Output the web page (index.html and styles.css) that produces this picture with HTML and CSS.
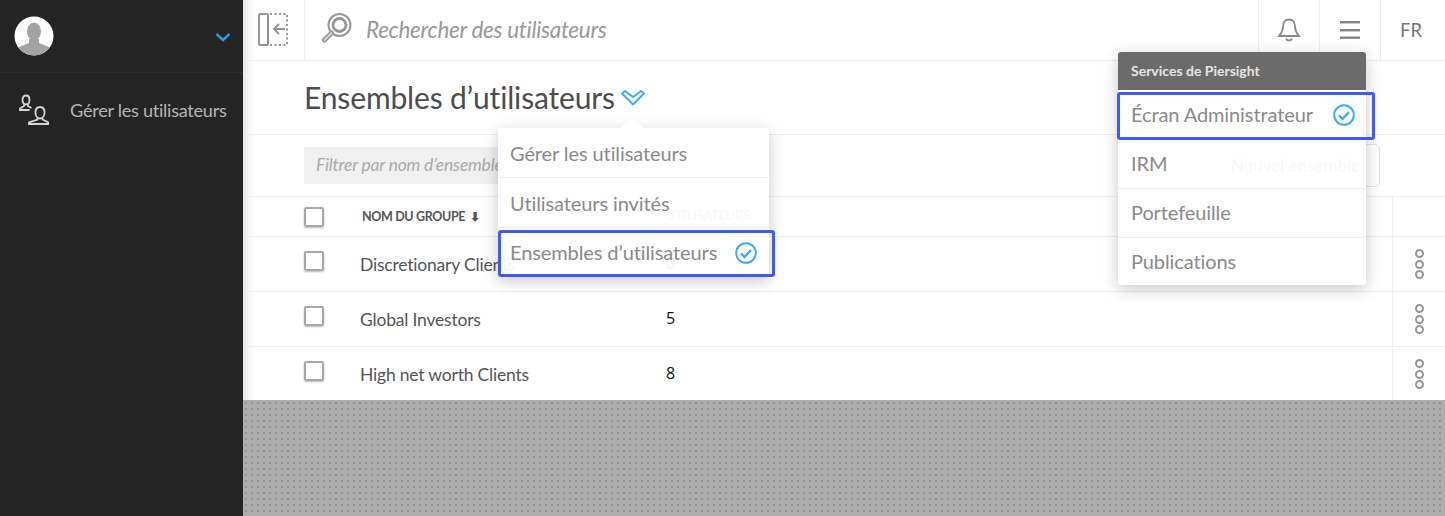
FILE: index.html
```html
<!DOCTYPE html>
<html lang="fr">
<head>
    <meta charset="UTF-8">
    <title>Ensembles d’utilisateurs</title>
    <link rel="stylesheet" href="styles.css">
</head>
<body>
    <div class="app">
        <aside class="sidebar">
            <div class="profile">
                <svg class="avatar" width="40" height="40" viewBox="0 0 40 40">
                    <circle cx="20" cy="20" r="19.5" fill="#fff"/>
                    <clipPath id="avatar-clip"><circle cx="20" cy="20" r="19.5"/></clipPath>
                    <g clip-path="url(#avatar-clip)" fill="#a3a3a3">
                        <ellipse cx="20" cy="15.5" rx="7" ry="9"/>
                        <path d="M15 23h10v4l10 4c3 1 4 5 4 9H1c0-4 1-8 4-9l10-4z"/>
                    </g>
                </svg>
                <svg class="caret" width="16" height="10" viewBox="0 0 16 10"><path d="M1.5 2 8 8l6.500-6" fill="none" stroke="#2a9be0" stroke-width="2.400"/></svg>
            </div>
            <div class="nav-item">
                <svg width="30" height="32" viewBox="0 0 30 32" fill="none" stroke="#d6d6d6" stroke-width="1.800">
                    <path d="M3.500 6c0-3 1.500-4.500 3.500-4.500S10.500 3 10.500 6 9 10.500 7 10.500 3.500 9 3.500 6z"/>
                    <path d="M5 10.500V12l-4 2.500V16h9.500M9 10.500V12l3.500 2"/>
                    <path d="M16.500 18.500c0-3.500 2-5.500 4.500-5.500s4.500 2 4.500 5.500-2 6-4.500 6-4.500-2.500-4.500-6z"/>
                    <path d="M18.500 24v1.500L10 28.500V30h19.500v-1.500L23.500 25.500V24"/>
                </svg>
                <span>Gérer les utilisateurs</span>
            </div>
        </aside>

        <div class="main">
            <header class="topbar">
                <div class="collapse-btn">
                    <svg width="32" height="34" viewBox="0 0 32 34" fill="none" stroke="#959595">
                        <rect x="2" y="2" width="9" height="31" rx="1" stroke-width="2"/>
                        <path d="M13 2h17v31H13" stroke-width="2" stroke-dasharray="2 2.500"/>
                        <path d="M28 17H17M22 12l-5 5 5 5" stroke-width="2"/>
                    </svg>
                </div>
                <div class="search">
                    <svg width="32" height="32" viewBox="0 0 32 32" fill="none" stroke="#969696">
                        <circle cx="18.500" cy="12" r="11" stroke-width="2"/>
                        <circle cx="18.500" cy="12" r="6.500" stroke-width="2.800"/>
                        <path d="M10.500 20 3.500 27" stroke-width="5" stroke-linecap="round"/>
                        <path d="M10.500 20 3.500 27" stroke="#e4e4e4" stroke-width="1.500" stroke-linecap="round"/>
                    </svg>
                    <span>Rechercher des utilisateurs</span>
                </div>
                <div class="top-btn">
                    <svg width="24" height="26" viewBox="0 0 24 26" fill="none" stroke="#8a8a8a" stroke-width="1.800">
                        <path d="M12 2.500c-4 0-6 3-6 7 0 5-2 7-4 9.500h20c-2-2.500-4-4.500-4-9.500 0-4-2-7-6-7zM9 21.500c.5 1.500 1.500 2 3 2s2.500-.5 3-2"/>
                    </svg>
                </div>
                <div class="top-btn">
                    <svg width="20" height="18" viewBox="0 0 20 18" fill="#858585"><rect y="0" width="20" height="2.400"/><rect y="8" width="20" height="2.400"/><rect y="15.500" width="20" height="2.400"/></svg>
                </div>
                <div class="top-btn lang">FR</div>
            </header>

            <div class="title-row">
                <h1>Ensembles d’utilisateurs</h1>
                <svg class="title-caret" width="26" height="18" viewBox="0 0 26 18" fill="none" stroke="#3fa9f5" stroke-width="2" stroke-linejoin="round"><path d="M2 4.500 5 2l8 6 8-6 3 2.500L13 15.500z"/></svg>
            </div>

            <div class="filter-row">
                <div class="filter">Filtrer par nom d’ensemble</div>
                <div class="new-btn">Nouvel ensemble</div>
            </div>

            <div class="row head">
                <span class="box"></span>
                <span class="name">NOM DU GROUPE <b>⬇</b></span>
                <span class="count">UTILISATEURS</span>
                <span class="actions"></span>
            </div>
            <div class="row">
                <span class="box"></span>
                <span class="name">Discretionary Clients</span>
                <span class="count">0</span>
                <span class="actions"><i></i><i></i><i></i></span>
            </div>
            <div class="row">
                <span class="box"></span>
                <span class="name">Global Investors</span>
                <span class="count">5</span>
                <span class="actions"><i></i><i></i><i></i></span>
            </div>
            <div class="row row-last">
                <span class="box"></span>
                <span class="name">High net worth Clients</span>
                <span class="count">8</span>
                <span class="actions"><i></i><i></i><i></i></span>
            </div>
            <div class="backdrop"></div>

            <div class="menu menu-sets">
                <div class="menu-item">Gérer les utilisateurs</div>
                <div class="menu-item">Utilisateurs invités</div>
                <div class="menu-item selected">Ensembles d’utilisateurs
                    <svg width="24" height="24" viewBox="0 0 24 24" fill="none" stroke="#3fa9f5" stroke-width="2"><circle cx="12" cy="12" r="9.800"/><path d="M7 12.500l3.500 3.500L17 9" stroke-width="2.400"/></svg>
                </div>
            </div>

            <div class="menu menu-services">
                <div class="menu-title">Services de Piersight</div>
                <div class="menu-item selected">Écran Administrateur
                    <svg width="24" height="24" viewBox="0 0 24 24" fill="none" stroke="#3fa9f5" stroke-width="2"><circle cx="12" cy="12" r="9.800"/><path d="M7 12.500l3.500 3.500L17 9" stroke-width="2.400"/></svg>
                </div>
                <div class="menu-item">IRM</div>
                <div class="menu-item">Portefeuille</div>
                <div class="menu-item">Publications</div>
            </div>
        </div>
    </div>
</body>
</html>
```

FILE: styles.css
```css
* {
    box-sizing: border-box;
}
html, body {
    height: 100%;
}
body {
    margin: 0;
    overflow: hidden;
    font-family: Lato, "Open Sans", sans-serif;
    color: #666;
    background: #fff;
}
.app {
    display: flex;
    height: 516px;
}
.sidebar {
    width: 243px;
    flex: none;
    background: #242424;
    color: #b5b5b5;
}
.profile {
    height: 73px;
    padding: 16px 12px 0 14px;
    display: flex;
    justify-content: space-between;
    align-items: flex-start;
    border-bottom: 1px solid #2d2d2d;
}
.caret {
    margin-top: 16px;
}
.nav-item {
    display: flex;
    align-items: center;
    gap: 21px;
    padding: 21px 0 0 19px;
    font-size: 18.200px;
    letter-spacing: -0.3px;
}
.main {
    flex: 1;
    position: relative;
    display: flex;
    flex-direction: column;
    box-shadow: inset 14px 0 14px -14px #ccc;
}
.topbar {
    height: 61px;
    display: flex;
    align-items: stretch;
    border-bottom: 1px solid #eee;
}
.collapse-btn {
    width: 62px;
    padding: 12px 0 0 14px;
    border-right: 1px solid #eee;
}
.search {
    flex: 1;
    display: flex;
    align-items: center;
    gap: 13px;
    padding: 0 0 2px 16px;
    font-size: 22.500px;
    font-style: italic;
    color: #999;
    letter-spacing: -0.3px;
}
.top-btn {
    width: 61px;
    display: flex;
    align-items: center;
    justify-content: center;
    border-left: 1px solid #eee;
}
.lang {
    width: 65px;
    padding-right: 4px;
    font-size: 18.500px;
    color: #777;
}
.title-row {
    height: 74px;
    padding: 0 0 2px 61px;
    display: flex;
    align-items: center;
    gap: 5px;
    border-bottom: 1px solid #eee;
}
.title-caret {
    margin-top: 2px;
}
h1 {
    margin: 0;
    font-size: 30px;
    font-weight: 400;
    color: #4d4d4d;
    letter-spacing: -0.15px;
}
.filter-row {
    height: 62px;
    padding: 12px 65px 0 61px;
    display: flex;
    justify-content: space-between;
    align-items: flex-start;
    border-bottom: 1px solid #eee;
}
.filter {
    width: 320px;
    height: 37px;
    line-height: 36px;
    padding-left: 12px;
    background: #f0f0f0;
    font-size: 17.500px;
    font-style: italic;
    color: #aaa;
    letter-spacing: -0.2px;
    white-space: nowrap;
}
.new-btn {
    width: 158px;
    height: 43px;
    margin-top: -3px;
    padding-right: 11px;
    line-height: 41px;
    text-align: center;
    border: 1px solid #e3e3e3;
    border-radius: 5px;
    font-size: 17px;
    color: #777;
}
.row {
    height: 55px;
    padding-left: 61px;
    display: flex;
    align-items: center;
    border-bottom: 1px solid #eee;
    font-size: 17.500px;
    letter-spacing: -0.2px;
}
.row-last {
    height: 53px;
    padding-top: 1px;
    border-bottom: 0;
}
.row.head {
    height: 40px;
    font-size: 12.500px;
    letter-spacing: -0.35px;
}
.box {
    width: 20px;
    height: 20px;
    flex: none;
    margin-top: -6px;
    border: 2px solid #a8a8a8;
    border-radius: 2px;
    box-shadow: 0 1px 2px #bbb;
}
.row.head .box {
    margin-top: 0;
}
.name {
    width: 306px;
    flex: none;
    margin-left: 36px;
    color: #555;
    white-space: nowrap;
}
.head .name {
    margin-left: 38px;
    width: 304px;
    font-weight: 700;
}
.head .name b {
    font-size: 12px;
    margin-left: 2px;
}
.count {
    flex: 1;
    font-family: "Open Sans", sans-serif;
    font-size: 16px;
    color: #111;
    margin-top: -3px;
}
.head .count {
    font-size: 12.500px;
    font-family: Lato, sans-serif;
    font-weight: 700;
    color: #888;
    letter-spacing: 0;
}
.actions {
    width: 53px;
    align-self: stretch;
    flex: none;
    display: flex;
    flex-direction: column;
    align-items: center;
    justify-content: center;
    gap: 1.500px;
    border-left: 1px solid #eee;
}
.actions i {
    width: 9px;
    height: 9px;
    border: 2.500px solid #969696;
    border-radius: 50%;
}
.backdrop {
    flex: 1;
    background-color: #adadad;
    background-image: radial-gradient(#949494 0.7px, transparent 1px);
    background-size: 6px 6px;
}
/* slightly see-through, the page text shows faintly behind the menus */
.menu {
    position: absolute;
    background: rgba(255, 255, 255, 0.94);
    border-radius: 3px;
    box-shadow: 0 4px 16px rgba(0, 0, 0, 0.22);
}
.menu-sets {
    left: 255px;
    top: 128px;
    width: 271px;
}
.menu-sets::before {
    content: "";
    position: absolute;
    left: 122px;
    top: -11px;
    border: 12px solid transparent;
    border-top: 0;
    border-bottom: 11px solid #fff;
}
.menu-services {
    left: 875px;
    top: 52px;
    width: 248px;
}
.menu-title {
    height: 38px;
    line-height: 38px;
    padding-left: 13px;
    background: #6b6b6b;
    border-radius: 3px 3px 0 0;
    color: #e6e6e6;
    font-size: 14px;
    font-weight: 700;
}
.menu-item {
    height: 50px;
    line-height: 51px;
    padding-left: 12px;
    border-bottom: 1px solid #eee;
    font-size: 20px;
    letter-spacing: -0.1px;
    color: #8a8a8a;
}
.menu-services .menu-item {
    height: 49px;
    line-height: 47px;
    padding-left: 13px;
}
.menu-services .menu-item:last-child {
    height: 47px;
}
.menu-item:last-child {
    border-bottom: 0;
}
.menu-item.selected {
    display: flex;
    align-items: center;
    justify-content: space-between;
    width: 277px;
    height: 47px;
    margin-top: 2px;
    padding: 0 14px 2px 9px;
    border: 3px solid #3d5afe;
    border-radius: 3px;
}
.menu-services .menu-item.selected {
    width: 258px;
    height: 48px;
    margin: 2px 0 0 -1px;
    padding: 0 16px 3px 11px;
}
```
